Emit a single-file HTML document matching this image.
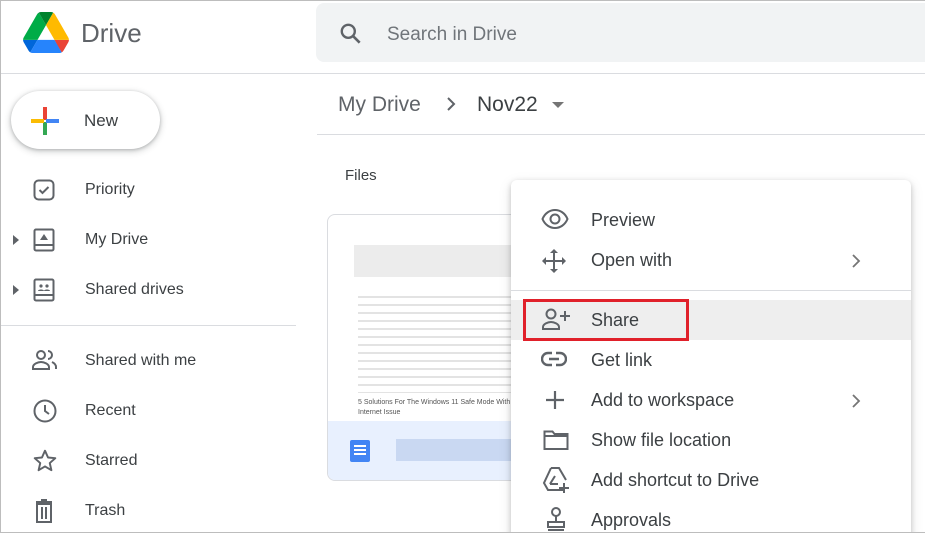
<!DOCTYPE html>
<html><head><meta charset="utf-8"><style>
*{margin:0;padding:0;box-sizing:border-box}
html,body{width:925px;height:533px;overflow:hidden}
body{background:#fff;font-family:"Liberation Sans",Arial,sans-serif;color:#3c4043;position:relative}
.frame{position:absolute;left:0;top:0;width:925px;height:533px;border:1px solid #bdbdbd;border-right:none;pointer-events:none;z-index:50}
.abs{position:absolute}
.nav{position:absolute;left:85px;font-size:16px;color:#3c4043}
.ico{position:absolute;left:32px}
.mi{position:absolute;left:591px;font-size:18px;color:#3c4043}
.mico{position:absolute;left:541px}
</style></head><body>
<div class="frame"></div>
<svg class="abs" style="left:23px;top:12px" width="46" height="41" viewBox="0 0 87.3 78">
<path d="M6.6 66.85l3.85 6.65c.8 1.4 1.950 2.5 3.3 3.3L27.5 53H0c0 1.55.4 3.1 1.2 4.5z" fill="#0066da"/>
<path d="M43.65 25L29.9 1.2c-1.35.8-2.5 1.9-3.3 3.3L1.2 48.5A9 9 0 000 53h27.5z" fill="#00ac47"/>
<path d="M73.55 76.8c1.35-.8 2.5-1.9 3.3-3.3l1.6-2.75 7.65-13.25c.8-1.4 1.2-2.95 1.2-4.5H59.8l5.850 11.5z" fill="#ea4335"/>
<path d="M43.65 25L57.4 1.2C56.05.4 54.5 0 52.9 0H34.4c-1.6 0-3.15.45-4.5 1.2z" fill="#00832d"/>
<path d="M59.8 53H27.5L13.75 76.8c1.35.8 2.9 1.2 4.5 1.2h50.8c1.6 0 3.15-.45 4.5-1.2z" fill="#2684fc"/>
<path d="M73.4 26.5L60.7 4.5c-.8-1.4-1.95-2.5-3.3-3.3L43.65 25 59.8 53h27.45c0-1.55-.4-3.1-1.2-4.5z" fill="#ffba00"/>
</svg>
<div class="abs" style="left:81px;top:18px;font-size:26px;color:#5f6368">Drive</div>
<div class="abs" style="left:316px;top:3px;width:620px;height:59px;background:#f1f3f4;border-radius:8px"></div>
<svg class="abs" style="left:338px;top:21px" width="26" height="26" viewBox="0 0 24 24"><circle cx="9.5" cy="9.5" r="6" fill="none" stroke="#5f6368" stroke-width="2.2"/><path d="M14 14l6 6" stroke="#5f6368" stroke-width="2.4"/></svg>
<div class="abs" style="left:387px;top:24px;font-size:19px;color:#70757a">Search in Drive</div>
<div class="abs" style="left:0;top:73px;width:925px;height:1px;background:#dadce0"></div>
<div class="abs" style="left:11px;top:91px;width:149px;height:58px;border-radius:29px;background:#fff;box-shadow:0 1px 3px rgba(60,64,67,.3),0 2px 6px 2px rgba(60,64,67,.15)"></div>
<svg class="abs" style="left:29px;top:105px" width="32" height="32" viewBox="0 0 32 32"><rect x="14" y="2" width="4" height="13" fill="#ea4335"/><rect x="14" y="17" width="4" height="13" fill="#34a853"/><rect x="2" y="14" width="13" height="4" fill="#fbbc04"/><rect x="17" y="14" width="13" height="4" fill="#4285f4"/></svg>
<div class="abs" style="left:84px;top:111px;font-size:17px;color:#3c4043">New</div>
<svg class="ico" style="top:178px" width="24" height="24" viewBox="0 0 24 24"><rect x="2.5" y="2.5" width="19" height="19" rx="4" fill="none" stroke="#5f6368" stroke-width="2"/><path d="M7.5 12l3 3 6-6" fill="none" stroke="#5f6368" stroke-width="2"/></svg>
<div class="nav" style="top:181px">Priority</div>
<svg class="abs" style="left:12px;top:234px" width="8" height="12"><path d="M1 1l6 5-6 5z" fill="#5f6368"/></svg>
<svg class="ico" style="top:228px" width="24" height="24" viewBox="0 0 24 24"><rect x="2.5" y="1.5" width="19" height="21" rx="1.5" fill="none" stroke="#5f6368" stroke-width="2"/><path d="M3 17h18" stroke="#5f6368" stroke-width="2"/><path d="M12 6l4 6H8z" fill="#5f6368"/></svg>
<div class="nav" style="top:231px">My Drive</div>
<svg class="abs" style="left:12px;top:284px" width="8" height="12"><path d="M1 1l6 5-6 5z" fill="#5f6368"/></svg>
<svg class="ico" style="top:278px" width="24" height="24" viewBox="0 0 24 24"><rect x="2.5" y="1.5" width="19" height="21" rx="1.5" fill="none" stroke="#5f6368" stroke-width="2"/><path d="M3 17h18" stroke="#5f6368" stroke-width="2"/><circle cx="9" cy="8" r="1.6" fill="#5f6368"/><circle cx="15" cy="8" r="1.6" fill="#5f6368"/><path d="M6 13c0-2 6-2 6 0zM12 13c0-2 6-2 6 0z" fill="#5f6368"/></svg>
<div class="nav" style="top:281px">Shared drives</div>
<div class="abs" style="left:0;top:325px;width:296px;height:1px;background:#dadce0"></div>
<svg class="ico" style="left:31px;top:348px" width="28" height="24" viewBox="0 0 28 24"><circle cx="10" cy="7" r="4" fill="none" stroke="#5f6368" stroke-width="2"/><path d="M2 21v-2c0-3 5-5 8-5s8 2 8 5v2z" fill="none" stroke="#5f6368" stroke-width="2"/><path d="M17 3a4 4 0 010 8M21 14c2 1 4 2.5 4 5v2" fill="none" stroke="#5f6368" stroke-width="2"/></svg>
<div class="nav" style="top:352px">Shared with me</div>
<svg class="ico" style="top:398px" width="26" height="26" viewBox="0 0 26 26"><circle cx="13" cy="13" r="10.5" fill="none" stroke="#5f6368" stroke-width="2"/><path d="M13 7v6l4 3" fill="none" stroke="#5f6368" stroke-width="2"/></svg>
<div class="nav" style="top:402px">Recent</div>
<svg class="ico" style="top:448px" width="26" height="26" viewBox="0 0 24 24"><path d="M12 2.5l2.8 6.3 6.7.6-5.1 4.5 1.5 6.6L12 17l-5.9 3.5 1.5-6.6-5.1-4.5 6.7-.6z" fill="none" stroke="#5f6368" stroke-width="1.8" stroke-linejoin="round"/></svg>
<div class="nav" style="top:452px">Starred</div>
<svg class="ico" style="top:498px" width="24" height="26" viewBox="0 0 24 26"><path d="M4 4h16M9 2h6" stroke="#5f6368" stroke-width="2"/><rect x="5" y="6" width="14" height="18" fill="none" stroke="#5f6368" stroke-width="2"/><path d="M10 9v12M14 9v12" stroke="#5f6368" stroke-width="2"/></svg>
<div class="nav" style="top:502px">Trash</div>
<div class="abs" style="left:338px;top:93px;font-size:21px;color:#5f6368">My Drive</div>
<svg class="abs" style="left:444px;top:96px" width="14" height="16"><path d="M4 2l6 6-6 6" fill="none" stroke="#5f6368" stroke-width="2"/></svg>
<div class="abs" style="left:477px;top:93px;font-size:21px;color:#3c4043">Nov22</div>
<svg class="abs" style="left:551px;top:101px" width="14" height="8"><path d="M1 1h12L7 7z" fill="#757575"/></svg>
<div class="abs" style="left:317px;top:134px;width:608px;height:1px;background:#dadce0"></div>
<div class="abs" style="left:345px;top:167px;font-size:15px;color:#3c4043">Files</div>
<div class="abs" style="left:327px;top:214px;width:200px;height:267px;border:1px solid #dadce0;border-radius:8px;overflow:hidden;background:#fff">
 <div class="abs" style="left:26px;top:30px;width:165px;height:32px;background:#ececec"></div>
 <div class="abs" style="left:30px;top:78px;width:160px;height:100px;background:repeating-linear-gradient(#fff 0 3px,#dcdcdc 3px 5px,#fff 5px 8px);opacity:.8"></div>
 <div class="abs" style="left:30px;top:183px;font-size:7px;color:#555;line-height:10px">5 Solutions For The Windows 11 Safe Mode With<br>Internet Issue</div>
 <div class="abs" style="left:0;top:206px;width:200px;height:61px;background:#e8f0fe"></div>
 <div class="abs" style="left:22px;top:225px;width:20px;height:22px;background:#4285f4;border-radius:2px"></div>
 <div class="abs" style="left:26px;top:230px;width:12px;height:2px;background:#fff;box-shadow:0 4px 0 #fff,0 8px 0 #fff"></div>
 <div class="abs" style="left:68px;top:224px;width:120px;height:22px;background:#c9d8f2"></div>
</div>
<div class="abs" style="left:511px;top:180px;width:400px;height:360px;background:#fff;border-radius:6px;box-shadow:0 2px 6px rgba(0,0,0,.2),0 4px 14px rgba(0,0,0,.1)"></div>
<div class="abs" style="left:511px;top:290px;width:400px;height:1px;background:#dadce0"></div>
<div class="abs" style="left:511px;top:300px;width:400px;height:40px;background:#eeeeee"></div>
<div class="abs" style="left:523px;top:299px;width:166px;height:42px;border:3px solid #e0202a"></div>
<svg class="mico" style="top:208px" width="28" height="22" viewBox="0 0 28 22"><path d="M1.5 11C4 5 9 2 14 2s10 3 12.5 9C24 17 19 20 14 20S4 17 1.5 11z" fill="none" stroke="#5f6368" stroke-width="2"/><circle cx="14" cy="11" r="4.5" fill="none" stroke="#5f6368" stroke-width="2"/></svg>
<div class="mi" style="top:210px">Preview</div>
<svg class="mico" style="top:248px" width="26" height="26" viewBox="0 0 26 26"><path d="M13 3v20M3 13h20" stroke="#5f6368" stroke-width="2"/><path d="M13 1l4 4H9zM13 25l4-4H9zM1 13l4-4v8zM25 13l-4-4v8z" fill="#5f6368"/></svg>
<div class="mi" style="top:250px">Open with</div>
<svg class="abs" style="left:851px;top:253px" width="10" height="16"><path d="M2 2l6 6-6 6" fill="none" stroke="#757575" stroke-width="1.8"/></svg>
<svg class="mico" style="top:307px" width="30" height="24" viewBox="0 0 30 24"><circle cx="10" cy="7" r="4.5" fill="none" stroke="#5f6368" stroke-width="2"/><path d="M2 22v-2c0-3 5-5 8-5s8 2 8 5v2z" fill="none" stroke="#5f6368" stroke-width="2"/><path d="M24 4v10M19 9h10" stroke="#5f6368" stroke-width="2"/></svg>
<div class="mi" style="top:310px">Share</div>
<svg class="mico" style="top:350px" width="26" height="18" viewBox="0 0 26 18"><path d="M11 3H7a6 6 0 000 12h4M15 3h4a6 6 0 010 12h-4M8 9h10" fill="none" stroke="#5f6368" stroke-width="2.4"/></svg>
<div class="mi" style="top:350px">Get link</div>
<svg class="mico" style="left:545px;top:390px" width="20" height="20"><path d="M10 1v18M1 10h18" stroke="#5f6368" stroke-width="2.2"/></svg>
<div class="mi" style="top:390px">Add to workspace</div>
<svg class="abs" style="left:851px;top:393px" width="10" height="16"><path d="M2 2l6 6-6 6" fill="none" stroke="#757575" stroke-width="1.8"/></svg>
<svg class="mico" style="left:543px;top:429px" width="26" height="22" viewBox="0 0 26 22"><path d="M1.5 2.5h8l2 2.5h13v15h-23z" fill="none" stroke="#5f6368" stroke-width="2"/><path d="M2 7h23" stroke="#5f6368" stroke-width="2"/></svg>
<div class="mi" style="top:430px">Show file location</div>
<svg class="mico" style="left:542px;top:466px" width="28" height="28" viewBox="0 0 28 28"><path d="M9 2h8l7 12M21 24H6l-4-7L9 2" fill="none" stroke="#5f6368" stroke-width="2"/><path d="M8 18l5-8M8 18h8" fill="none" stroke="#5f6368" stroke-width="2"/><path d="M22 17v10M17 22h10" stroke="#5f6368" stroke-width="2"/></svg>
<div class="mi" style="top:470px">Add shortcut to Drive</div>
<svg class="mico" style="left:545px;top:506px" width="22" height="27" viewBox="0 0 22 27"><circle cx="11" cy="6" r="4" fill="none" stroke="#5f6368" stroke-width="2"/><path d="M11 10v5M3 16h16v5H3zM3 24h16" fill="none" stroke="#5f6368" stroke-width="2"/></svg>
<div class="mi" style="top:510px">Approvals</div>
</body></html>
